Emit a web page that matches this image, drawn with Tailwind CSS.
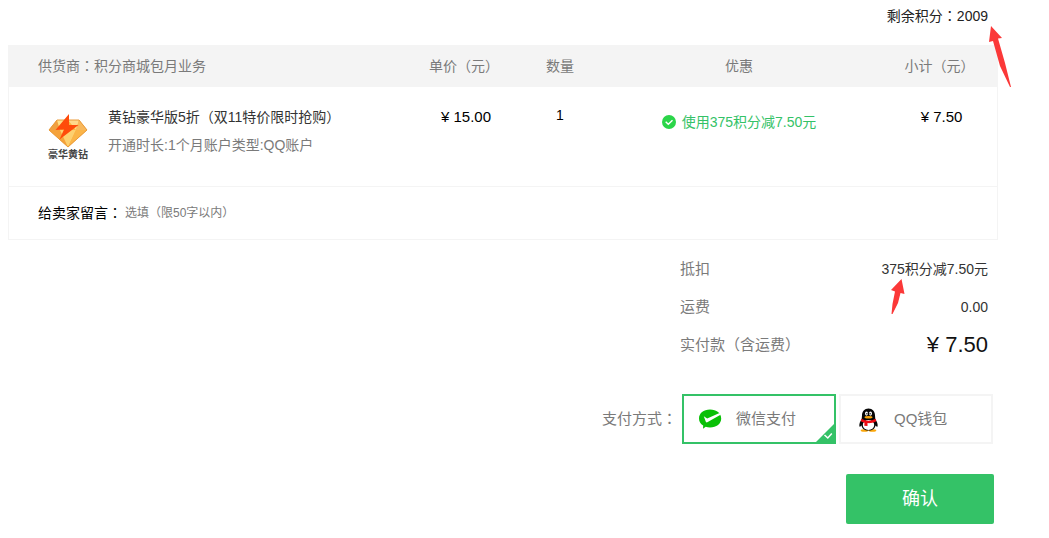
<!DOCTYPE html>
<html lang="zh-CN">

<head>
    <meta charset="UTF-8"/>
    <meta content="width=device-width, initial-scale=1.0" name="viewport"/>
    <script src="https://cdn.jsdelivr.net/npm/@tailwindcss/browser@4"></script>
    <title>确认订单 - 积分商城</title>
</head>

<body class="bg-white pl-2 pr-[51px] font-['Liberation_Sans','Noto_Sans_CJK_SC',sans-serif] text-sm text-[#333]">
<header class="relative flex h-[45px] justify-end pt-1.5 pr-2.5 leading-5 text-[#222]">
    <p>剩余积分<span class="font-['Noto_Sans_CJK_TC',sans-serif] leading-none" lang="zh-TW">：</span>2009</p>
    <svg class="absolute top-[26px] -right-[13px] h-[62px] w-[22px]" viewBox="0 0 22 62" fill="#fb3838" aria-hidden="true">
        <path d="M2 0 13 12 9 12.500 16 37 22 61H21L11 40 4 15 0 16Z"/>
    </svg>
</header>

<main>
    <section class="border border-t-0 border-[#f4f4f4]">
        <table class="w-full table-fixed text-center">
            <thead class="bg-[#f4f4f4] text-[#7a7a7a]">
            <tr class="h-[42px]">
                <th class="pl-[29px] text-left font-normal leading-5">供货商<span class="font-['Noto_Sans_CJK_TC',sans-serif] leading-none" lang="zh-TW">：</span>积分商城包月业务</th>
                <th class="w-[120px] font-normal">单价（元）</th>
                <th class="w-[72px] font-normal">数量</th>
                <th class="w-[286px] font-normal">优惠</th>
                <th class="w-[115px] font-normal">小计（元）</th>
            </tr>
            </thead>
            <tbody>
            <tr class="h-[99px] border-b border-[#f4f4f4] align-top">
                <td class="pt-[18px] pl-[29px] text-left">
                    <div class="flex gap-2.5">
                        <div class="flex w-[60px] shrink-0 flex-col items-center pt-2">
                            <svg class="h-9 w-10" viewBox="0 0 40 36" aria-hidden="true">
                                <path d="M9 7H31L39 17 20 34 1 17Z" fill="#fbb43e"/>
                                <path d="M1 17 9 7 12 17Z" fill="#f0a040"/>
                                <path d="M9 7H20L12 17Z" fill="#ffe08a"/>
                                <path d="M20 7H31L28 17Z" fill="#ffd88a"/>
                                <path d="M31 7 39 17H28Z" fill="#f8b85c"/>
                                <path d="M1 17H12L20 34Z" fill="#f5a23a"/>
                                <path d="M12 17H28L20 34Z" fill="#fdd070"/>
                                <path d="M28 17H39L20 34Z" fill="#fbb548"/>
                                <path d="M9 7H31L39 17 20 34 1 17Z" fill="none" stroke="#ea9a3a" stroke-width="1"/>
                                <path d="M21 1 7.500 17 16 16.500 11.500 26.500 30.500 12 21 12Z" fill="#ff4b0a"/>
                            </svg>
                            <span class="text-[10px] leading-3 font-bold text-[#444]">豪华黄钻</span>
                        </div>
                        <div>
                            <p class="leading-6">黄钻豪华版5折（双11特价限时抢购）</p>
                            <p class="mt-1 leading-6 text-[#7a7a7a]">开通时长:1个月账户类型:QQ账户</p>
                        </div>
                    </div>
                </td>
                <td class="pt-5 pl-1 text-[15px] leading-5 text-black">¥ 15.00</td>
                <td class="pt-[18px] leading-5 text-black">1</td>
                <td class="pt-[25px] leading-5 text-[#34c267]">
                    <div class="flex items-center justify-center gap-1.5">
                        <svg class="size-3.5" viewBox="0 0 14 14" aria-hidden="true">
                            <circle cx="7" cy="7" r="7" fill="#2bd549"/>
                            <path d="M3.700 6.700 6.300 9.300 10.500 5.200" fill="none" stroke="#fff" stroke-width="1.400"/>
                        </svg>
                        <span>使用375积分减7.50元</span>
                    </div>
                </td>
                <td class="pt-5 pl-1 text-[15px] leading-5 text-black">¥ 7.50</td>
            </tr>
            </tbody>
        </table>
        <div class="flex h-[52px] items-center pl-[29px]">
            <label class="leading-5 text-black" for="message">给卖家留言<span class="font-['Noto_Sans_CJK_TC',sans-serif] leading-none" lang="zh-TW">：</span></label>
            <input class="ml-[3px] h-6 w-80 text-xs text-[#333] outline-none placeholder:text-[#7a7a7a]" id="message"
                   maxlength="50" placeholder="选填（限50字以内）" type="text"/>
        </div>
    </section>

    <dl class="mt-2.5 mr-2.5 ml-auto w-[308px] text-[15px] text-[#7a7a7a]">
        <div class="flex h-[38px] items-center justify-between">
            <dt>抵扣</dt>
            <dd class="relative text-sm text-[#333]">
                375积分减7.50元
                <svg class="absolute top-5 left-2.5 h-[35px] w-3.5" viewBox="0 0 14 35" fill="#fb3838" aria-hidden="true">
                    <path d="M10.500 0 13.500 15 9.500 14 7 24 1.500 35H.500L1.500 25 4 12.500 0 11Z"/>
                </svg>
            </dd>
        </div>
        <div class="flex h-[38px] items-center justify-between">
            <dt>运费</dt>
            <dd class="text-sm text-[#333]">0.00</dd>
        </div>
        <div class="flex h-[38px] items-center justify-between">
            <dt>实付款（含运费）</dt>
            <dd class="text-[22px] leading-8 text-[#111]">¥ 7.50</dd>
        </div>
    </dl>

    <form>
        <fieldset class="mt-[30px] mr-[5px] flex items-center justify-end gap-[3px] text-[15px] text-[#7a7a7a]">
            <span class="mr-0.5 leading-5">支付方式<span class="font-['Noto_Sans_CJK_TC',sans-serif] leading-none" lang="zh-TW">：</span></span>
            <label class="relative flex h-[50px] w-[154px] items-center border-2 border-[#34c267] pl-3.5">
                <input checked class="sr-only" name="pay" type="radio" value="wechat"/>
                <svg class="mr-3.5 h-5 w-6" viewBox="0 0 24 20" aria-hidden="true">
                    <path d="M12 .500C18.500 .500 23.200 4.300 23.200 9.500S18.500 18.500 12 18.500C10.500 18.500 9 18.300 7.700 17.800L5 19.800 5.200 16.600C2.500 15 1 12.500 1 9.500 1 4.300 5.500 .500 12 .500Z" fill="#09c006"/>
                    <path d="M5.800 7.200 9.200 9.400 21.500 3.900 22.600 5.800 9.300 13.300C8.600 13.600 8.100 13.300 7.800 12.700Z" fill="#fff"/>
                </svg>
                <span>微信支付</span>
                <svg class="absolute right-0 bottom-0 size-[18px]" viewBox="0 0 18 18" aria-hidden="true">
                    <path d="M18 0V18H0Z" fill="#34c267"/>
                    <path d="M8.500 11 11.800 14 15.800 9.500" fill="none" stroke="#fff" stroke-width="1.500"/>
                </svg>
            </label>
            <label class="flex h-[50px] w-[154px] items-center border-2 border-[#f4f4f4] pl-[18px]">
                <input class="sr-only" name="pay" type="radio" value="qq"/>
                <svg class="mt-0.5 mr-4 h-6 w-[19px]" viewBox="0 0 19 24" aria-hidden="true">
                    <ellipse cx="5.500" cy="22.500" rx="3.800" ry="1.300" fill="#fba70a"/>
                    <ellipse cx="13.500" cy="22.500" rx="3.800" ry="1.300" fill="#fba70a"/>
                    <path d="M9.500 .500C13.500 .500 16 3.500 16 7.500L16.300 11C18 13.500 19 16 18.600 18.500 17.800 19 17 18 16.500 17.500 16 20.500 13.500 22.500 9.500 22.500S3 20.500 2.500 17.500C2 18 1.200 19 .400 18.500 0 16 1 13.500 2.700 11L3 7.500C3 3.500 5.500 .500 9.500 .500Z" fill="#060606"/>
                    <ellipse cx="9.500" cy="17" rx="5.700" ry="5" fill="#fff"/>
                    <path d="M2.300 10.800C7 13.300 12 13.300 16.700 10.800L17.200 13.300C14 15 11 15.300 8.500 15.100V18L5.300 17.800 5.500 14.700C4 14.300 2.800 13.800 1.800 13.200Z" fill="#ed0b12"/>
                    <ellipse cx="7.500" cy="5.600" rx="1.500" ry="2.100" fill="#fff"/>
                    <ellipse cx="11.500" cy="5.600" rx="1.500" ry="2.100" fill="#fff"/>
                    <circle cx="7.900" cy="5.800" r=".700"/>
                    <circle cx="11.100" cy="5.800" r=".700"/>
                    <ellipse cx="9.500" cy="9.200" rx="4" ry="1.300" fill="#fba70a"/>
                </svg>
                <span>QQ钱包</span>
            </label>
        </fieldset>
        <div class="mt-[30px] mr-1 flex justify-end">
            <button class="h-[50px] w-[148px] rounded-xs bg-[#34c267] text-lg text-white" type="button">确认</button>
        </div>
    </form>
</main>
</body>

</html>
